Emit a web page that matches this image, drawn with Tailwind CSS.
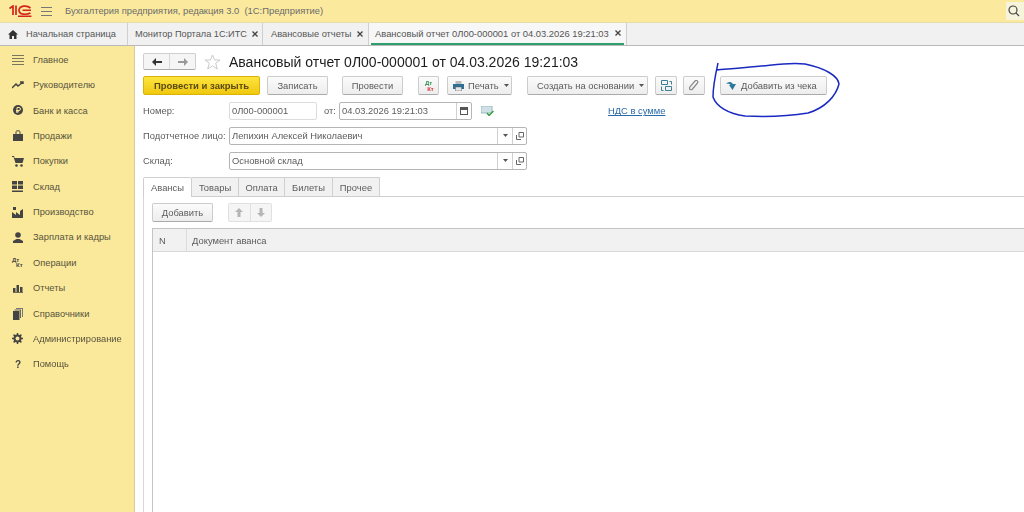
<!DOCTYPE html>
<html lang="ru">
<head>
<meta charset="UTF-8">
<title>Авансовый отчет</title>
<script src="https://cdn.jsdelivr.net/npm/@tailwindcss/browser@4"></script>
</head>
<body class="w-[1024px] h-[512px] overflow-hidden bg-white font-['Liberation_Sans',sans-serif] text-[10px] text-[#4a4a4a]">
<div class="blur-[0.35px]">

<!-- top bar -->
<div class="h-[23px] bg-[#fbea9e] flex items-center border-b border-[#e6dca8]">
  <svg class="ml-[9px] w-[23px] h-[12px]" viewBox="0 0 23 12" fill="none" stroke="#d2261c" stroke-width="1.700"><path d="M.5 3.500 4 1V10M7 .5V10"/><path d="M21.500 3C18 0 10.500 .5 10 5.200 10 9.800 17.500 10 21.500 8"/><path d="M13.500 5.300H22M9 11.300H22.500" stroke-width="1.400"/></svg>
  <svg class="ml-[9px] w-[11px] h-[9px]" viewBox="0 0 11 9" stroke="#777" stroke-width="1"><path d="M0 .5H11M0 4.500H11M0 8.500H11"/></svg>
  <span class="ml-[13px] text-[#6b6b6b] text-[9.400px]">Бухгалтерия предприятия, редакция 3.0&nbsp; (1С:Предприятие)</span>
  <div class="ml-auto w-[18px] h-[18px] bg-[#f8f4dc] flex items-center pl-[2px]">
    <svg class="w-[12px] h-[12px]" viewBox="0 0 12 12" fill="none" stroke="#444" stroke-width="1.200"><circle cx="5" cy="5" r="4"/><path d="M8 8 11 11"/></svg>
  </div>
</div>

<!-- tabs -->
<div class="h-[23px] bg-[#f1f1f1] border-b border-[#b9b9b9] flex text-[#555] text-[9.300px]">
  <div class="w-[128px] flex items-center border-r border-[#cfcfcf]">
    <svg class="ml-[8px] w-[10px] h-[9px]" viewBox="0 0 10 9" fill="#333"><path d="M5 0 10 4.500H8.500V9H6V6H4V9H1.500V4.500H0Z"/></svg>
    <span class="ml-[8px] pt-[2px]">Начальная страница</span>
  </div>
  <div class="w-[135px] flex items-center border-r border-[#cfcfcf] pl-[7px] text-[9.200px]">
    <span class="pt-[2px]">Монитор Портала 1С:ИТС</span>
    <svg class="ml-[5px] w-[6px] h-[6px]" viewBox="0 0 6 6" stroke="#444" stroke-width="1.300"><path d="M.5 .5 5.500 5.500M5.500 .5 .5 5.500"/></svg>
  </div>
  <div class="w-[106px] flex items-center border-r border-[#cfcfcf] pl-[8px]">
    <span class="pt-[2px]">Авансовые отчеты</span>
    <svg class="ml-[5px] w-[6px] h-[6px]" viewBox="0 0 6 6" stroke="#444" stroke-width="1.300"><path d="M.5 .5 5.500 5.500M5.500 .5 .5 5.500"/></svg>
  </div>
  <div class="w-[258px] flex items-center border-r border-[#cfcfcf] pl-[2px] pr-[2px] bg-[#f7f7f7] text-[9.400px]">
    <div class="w-full h-full flex items-center pl-[4px] border-b-2 border-[#2f9e6e]">
      <span class="pt-[2px]">Авансовый отчет 0Л00-000001 от 04.03.2026 19:21:03</span>
      <svg class="ml-[6px] w-[6px] h-[6px]" viewBox="0 0 6 6" stroke="#444" stroke-width="1.300"><path d="M.5 .5 5.500 5.500M5.500 .5 .5 5.500"/></svg>
    </div>
  </div>
</div>

<div class="flex h-[466px]">
  <!-- sidebar -->
  <nav class="w-[135px] shrink-0 bg-[#fbe99b] border-r border-[#d6cc9c] pt-[1px] text-[#57533c] text-[9.300px]">
    <div class="h-[25.400px] flex items-center"><svg class="ml-[12px] w-[12px] h-[10px]" viewBox="0 0 12 10" stroke="#7b765c"><path d="M0 .5H12M0 3.500H12M0 6.500H12M0 9.500H12"/></svg><span class="ml-[9px] pt-[2px]">Главное</span></div>
    <div class="h-[25.400px] flex items-center"><svg class="ml-[12px] w-[12px] h-[10px]" viewBox="0 0 12 10" fill="none" stroke="#444" stroke-width="1.500"><path d="M0 8 4 4 6 6 11 2M8 2H11V4"/></svg><span class="ml-[9px] pt-[2px]">Руководителю</span></div>
    <div class="h-[25.400px] flex items-center"><svg class="ml-[13px] w-[10px] h-[10px]" viewBox="0 0 10 10"><circle cx="5" cy="5" r="5" fill="#444"/><path d="M4 8V2.500H6A1.400 1.400 0 0 1 6 5.500H3M3 6.800H6" stroke="#fbe99b" fill="none"/></svg><span class="ml-[10px] pt-[2px]">Банк и касса</span></div>
    <div class="h-[25.400px] flex items-center"><svg class="ml-[13px] w-[10px] h-[11px]" viewBox="0 0 10 11" fill="#444"><path d="M0 4H10V11H0Z"/><path d="M3 4V1.500C3 .5 7 .5 7 1.500V4" fill="none" stroke="#444"/></svg><span class="ml-[10px] pt-[2px]">Продажи</span></div>
    <div class="h-[25.400px] flex items-center"><svg class="ml-[12px] w-[12px] h-[11px]" viewBox="0 0 12 11" fill="#444"><path d="M0 0H2L2.500 2H12L10.500 7H3.500L1.500 1H0Z"/><circle cx="4.500" cy="9.500" r="1.300"/><circle cx="9.500" cy="9.500" r="1.300"/></svg><span class="ml-[9px] pt-[2px]">Покупки</span></div>
    <div class="h-[25.400px] flex items-center"><svg class="ml-[12px] w-[11px] h-[11px]" viewBox="0 0 11 11" fill="#444"><path d="M0 0H5V3.500H0ZM6 0H11V3.500H6ZM0 4.500H5V8H0ZM6 4.500H11V8H6ZM0 9.500H11V11H0Z"/></svg><span class="ml-[10px] pt-[2px]">Склад</span></div>
    <div class="h-[25.400px] flex items-center"><svg class="ml-[12px] w-[11px] h-[11px]" viewBox="0 0 11 11" fill="#444"><path d="M0 11V5L4 8V5L8 8V4L11 2V11ZM1 0H4V3H1Z"/></svg><span class="ml-[10px] pt-[2px]">Производство</span></div>
    <div class="h-[25.400px] flex items-center"><svg class="ml-[13px] w-[10px] h-[11px]" viewBox="0 0 10 11" fill="#444"><circle cx="5" cy="3" r="2.800"/><path d="M0 11V9L3.500 7H6.500L10 9V11Z"/></svg><span class="ml-[10px] pt-[2px]">Зарплата и кадры</span></div>
    <div class="h-[25.400px] flex items-center"><span class="ml-[12px] w-[12px] text-[6px] leading-[5px] font-bold text-[#444]">Дт<br><span class="ml-[4px]">Кт</span></span><span class="ml-[9px] pt-[2px]">Операции</span></div>
    <div class="h-[25.400px] flex items-center"><svg class="ml-[13px] w-[10px] h-[9px]" viewBox="0 0 10 9" fill="#444"><path d="M0 4H2.500V8H0ZM3.500 1H6V8H3.500ZM7 3H9.500V8H7ZM0 8.200H10V9H0Z"/></svg><span class="ml-[10px] pt-[2px]">Отчеты</span></div>
    <div class="h-[25.400px] flex items-center"><svg class="ml-[13px] w-[10px] h-[12px]" viewBox="0 0 10 12"><path d="M3 0H10V9H9V1H3Z" fill="#777"/><path d="M1.500 1.500H8V10H7V2.500H1.500Z" fill="#666"/><path d="M0 3H6.500V12H0Z" fill="#444"/></svg><span class="ml-[10px] pt-[2px]">Справочники</span></div>
    <div class="h-[25.400px] flex items-center"><svg class="ml-[12px] w-[11px] h-[11px]" viewBox="0 0 11 11"><circle cx="5.500" cy="5.500" r="3" fill="none" stroke="#444" stroke-width="2"/><path d="M5.500 0V11M0 5.500H11M1.600 1.600 9.400 9.400M9.400 1.600 1.600 9.400" stroke="#444" stroke-width="1.500" stroke-dasharray="2 7"/></svg><span class="ml-[10px] pt-[2px]">Администрирование</span></div>
    <div class="h-[25.400px] flex items-center"><span class="ml-[15px] w-[8px] text-[10px] font-bold text-[#444]">?</span><span class="ml-[10px] pt-[2px]">Помощь</span></div>
  </nav>

  <!-- form -->
  <main class="flex-1 min-w-0 pl-[8px] overflow-hidden text-[#5c5c5c] text-[9.400px]">
    <div class="h-[30px] flex items-center pt-[1px]">
      <div class="w-[53px] h-[17px] flex rounded-[2px] border border-[#cfcfcf] border-b-[#aaa] bg-[#f5f5f5]">
        <div class="flex-1 flex items-center justify-center border-r border-[#d8d8d8]"><svg class="w-[10px] h-[8px]" viewBox="0 0 10 8" fill="#333"><path d="M0 4 4 0V3H10V5H4V8Z"/></svg></div>
        <div class="flex-1 flex items-center justify-center"><svg class="w-[10px] h-[8px]" viewBox="0 0 10 8" fill="#999"><path d="M10 4 6 0V3H0V5H6V8Z"/></svg></div>
      </div>
      <svg class="ml-[8px] w-[17px] h-[16px]" viewBox="0 0 17 16" fill="none" stroke="#c9c9c9"><path d="M8.500 1 10.600 6H16L11.700 9.300 13.300 15 8.500 11.700 3.700 15 5.300 9.300 1 6H6.400Z"/></svg>
      <h1 class="ml-[8px] text-[14px] leading-none text-[#1c1c1c]">Авансовый отчет 0Л00-000001 от 04.03.2026 19:21:03</h1>
    </div>

    <div class="h-[19px] flex items-center">
      <button class="w-[117px] h-[19px] pt-[2px] rounded-[2px] bg-gradient-to-b from-[#fde43c] to-[#f0c808] border border-[#d8b30a] text-[#5a4a10] text-[9.500px] font-bold">Провести и закрыть</button>
      <button class="ml-[7px] w-[61px] h-[19px] pt-[2px] rounded-[2px] bg-gradient-to-b from-[#fbfbfb] to-[#ededed] border border-[#ccc] border-b-[#aaa]">Записать</button>
      <button class="ml-[14px] w-[61px] h-[19px] pt-[2px] rounded-[2px] bg-gradient-to-b from-[#fbfbfb] to-[#ededed] border border-[#ccc] border-b-[#aaa]">Провести</button>
      <button class="ml-[15px] w-[21px] h-[19px] rounded-[2px] bg-gradient-to-b from-[#fbfbfb] to-[#ededed] border border-[#ccc] border-b-[#aaa] text-[6px] leading-[6px] font-bold"><span class="text-[#2f8f4f]">Дт</span><br><span class="ml-[4px] text-[#d33]">Кт</span></button>
      <button class="ml-[8px] w-[65px] h-[19px] rounded-[2px] bg-gradient-to-b from-[#fbfbfb] to-[#ededed] border border-[#ccc] border-b-[#aaa] flex items-center pl-[5px]">
        <svg class="w-[11px] h-[10px]" viewBox="0 0 11 10"><path d="M2.500 0H8.500V3H2.500Z" fill="#bbb"/><path d="M0 3H11V8H0Z" fill="#2e6f94"/><path d="M2.500 6H8.500V10H2.500Z" fill="#e5e5e5" stroke="#666" stroke-width=".5"/></svg>
        <span class="ml-[4px] pt-[2px]">Печать</span>
        <svg class="ml-[5px] w-[5px] h-[3px]" viewBox="0 0 5 3" fill="#555"><path d="M0 0H5L2.500 3Z"/></svg>
      </button>
      <button class="ml-[15px] w-[121px] h-[19px] rounded-[2px] bg-gradient-to-b from-[#fbfbfb] to-[#ededed] border border-[#ccc] border-b-[#aaa] flex items-center pl-[9px]">
        <span class="pt-[2px]">Создать на основании</span>
        <svg class="ml-[5px] w-[5px] h-[3px]" viewBox="0 0 5 3" fill="#555"><path d="M0 0H5L2.500 3Z"/></svg>
      </button>
      <button class="ml-[7px] w-[22px] h-[19px] rounded-[2px] bg-gradient-to-b from-[#fbfbfb] to-[#ededed] border border-[#ccc] border-b-[#aaa] flex items-center justify-center">
        <svg class="w-[11px] h-[11px]" viewBox="0 0 11 11" fill="none" stroke="#3f7f96"><path d="M.5 .5H6.500V4.500H.5ZM4.500 6.500H10.500V10.500H4.500ZM8.500 1.500H10.500V4.500M.5 6.500V10.500H2.500"/></svg>
      </button>
      <button class="ml-[6px] w-[22px] h-[19px] rounded-[2px] bg-gradient-to-b from-[#fbfbfb] to-[#ededed] border border-[#ccc] border-b-[#aaa] flex items-center justify-center">
        <svg class="w-[10px] h-[11px]" viewBox="0 0 10 11" fill="none" stroke="#888" stroke-width="1.200"><path d="M8.500 3 3.500 9C1.500 11 -.5 8.500 1 6.800L6 1C7.500 -.5 9.800 1.500 8.300 3.300L4 8.200"/></svg>
      </button>
      <button class="ml-[15px] w-[107px] h-[19px] rounded-[2px] bg-gradient-to-b from-[#fbfbfb] to-[#ededed] border border-[#ccc] border-b-[#aaa] flex items-center pl-[5px]">
        <svg class="w-[10px] h-[9px]" viewBox="0 0 10 9" fill="#2e7a9c"><path d="M0 3C2 .5 5 0 7 3L10 3 6.500 9 3 4H4.500C4 3 2 2.500 0 3Z"/></svg>
        <span class="ml-[5px] pt-[2px]">Добавить из чека</span>
      </button>
    </div>

    <div class="h-[25px] mt-[3px] flex items-center">
      <span class="w-[86px] pt-[2px]">Номер:</span>
      <div class="w-[88px] h-[18px] border border-[#dcdcdc] rounded-[2px] pl-[2px] pt-[2px] flex items-center">0Л00-000001</div>
      <span class="ml-[7px] w-[15px] pt-[2px]">от:</span>
      <div class="w-[133px] h-[18px] border border-[#b5b5b5] rounded-[2px] flex items-center pl-[2px]">
        <span class="flex-1 pt-[2px]">04.03.2026 19:21:03</span>
        <div class="w-[15px] h-full border-l border-[#d0d0d0] flex items-center justify-center"><svg class="w-[8px] h-[8px]" viewBox="0 0 8 8" fill="#555"><path d="M0 0H8V8H0ZM1 3V7H7V3Z" fill-rule="evenodd"/></svg></div>
      </div>
      <svg class="ml-[9px] w-[13px] h-[10px]" viewBox="0 0 13 10"><path d="M0 0H11V7H0Z" fill="#cfe0e6" stroke="#9bb"/><path d="M6 7 8 9.500 12.500 5" fill="none" stroke="#3aa14a" stroke-width="1.500"/></svg>
      <a class="ml-[114px] pt-[2px] text-[#2a6aa8] underline">НДС в сумме</a>
    </div>

    <div class="h-[25px] flex items-center">
      <span class="w-[86px] pt-[2px]">Подотчетное лицо:</span>
      <div class="w-[298px] h-[18px] border border-[#b5b5b5] rounded-[2px] flex items-center pl-[2px]">
        <span class="flex-1 pt-[2px]">Лепихин Алексей Николаевич</span>
        <div class="w-[15px] h-full border-l border-[#d0d0d0] flex items-center justify-center"><svg class="w-[5px] h-[3px]" viewBox="0 0 5 3" fill="#555"><path d="M0 0H5L2.500 3Z"/></svg></div>
        <div class="w-[14px] h-full border-l border-[#d0d0d0] flex items-center justify-center"><svg class="w-[8px] h-[8px]" viewBox="0 0 8 8" fill="none" stroke="#666"><path d="M3 .5H7.500V5H3ZM.5 3V7.500H5"/></svg></div>
      </div>
    </div>

    <div class="h-[25px] flex items-center">
      <span class="w-[86px] pt-[2px]">Склад:</span>
      <div class="w-[298px] h-[18px] border border-[#b5b5b5] rounded-[2px] flex items-center pl-[2px]">
        <span class="flex-1 pt-[2px]">Основной склад</span>
        <div class="w-[15px] h-full border-l border-[#d0d0d0] flex items-center justify-center"><svg class="w-[5px] h-[3px]" viewBox="0 0 5 3" fill="#555"><path d="M0 0H5L2.500 3Z"/></svg></div>
        <div class="w-[14px] h-full border-l border-[#d0d0d0] flex items-center justify-center"><svg class="w-[8px] h-[8px]" viewBox="0 0 8 8" fill="none" stroke="#666"><path d="M3 .5H7.500V5H3ZM.5 3V7.500H5"/></svg></div>
      </div>
    </div>

    <!-- inner tabs -->
    <div class="h-[20px] mt-[4px] flex border-b border-[#cfcfcf]">
      <div class="w-[49px] h-[20px] pt-[2px] flex items-center justify-center bg-white border border-b-0 border-[#cfcfcf] rounded-t-[2px]">Авансы</div>
      <div class="w-[47px] pt-[2px] flex items-center justify-center bg-[#f1f1f1] border-t border-r border-[#cfcfcf]">Товары</div>
      <div class="w-[46px] pt-[2px] flex items-center justify-center bg-[#f1f1f1] border-t border-r border-[#cfcfcf]">Оплата</div>
      <div class="w-[48px] pt-[2px] flex items-center justify-center bg-[#f1f1f1] border-t border-r border-[#cfcfcf]">Билеты</div>
      <div class="w-[47px] pt-[2px] flex items-center justify-center bg-[#f1f1f1] border-t border-r border-[#cfcfcf]">Прочее</div>
    </div>

    <div class="border-l border-[#d8d8d8] pl-[8px] h-full">
      <div class="h-[31px] flex items-center">
        <button class="w-[61px] h-[19px] pt-[2px] rounded-[2px] bg-gradient-to-b from-[#fbfbfb] to-[#ededed] border border-[#ccc] border-b-[#aaa]">Добавить</button>
        <div class="ml-[15px] w-[44px] h-[19px] flex rounded-[2px] border border-[#e0e0e0] bg-[#f5f5f5]">
          <div class="flex-1 flex items-center justify-center border-r border-[#e0e0e0]"><svg class="w-[8px] h-[9px]" viewBox="0 0 8 9" fill="#b5b5b5"><path d="M4 0 8 4H5.500V9H2.500V4H0Z"/></svg></div>
          <div class="flex-1 flex items-center justify-center"><svg class="w-[8px] h-[9px]" viewBox="0 0 8 9" fill="#b5b5b5"><path d="M4 9 8 5H5.500V0H2.500V5H0Z"/></svg></div>
        </div>
      </div>
      <div class="border-l border-t border-[#c4c4c4] h-full">
        <div class="h-[23px] flex items-center bg-[#f1f1f1] border-b border-[#d8d8d8]">
          <div class="w-[34px] h-full pt-[2px] flex items-center pl-[6px] border-r border-[#dcdcdc]">N</div>
          <div class="pl-[5px] pt-[2px]">Документ аванса</div>
        </div>
      </div>
    </div>
  </main>
</div>

<!-- hand-drawn marker circle over the button -->
<svg class="absolute left-0 top-0 pointer-events-none" width="1024" height="512" fill="none" stroke="#1a2ac0" stroke-width="1.500">
  <path d="M718 63C716 72 713 85 713 97 716 106 728 114 745 116 765 117 790 116 808 113 825 108 836 96 839 84 838 76 825 68 805 64 785 62 770 66 750 67 735 69 722 69 717 70"/>
</svg>
</div>
</body>
</html>
